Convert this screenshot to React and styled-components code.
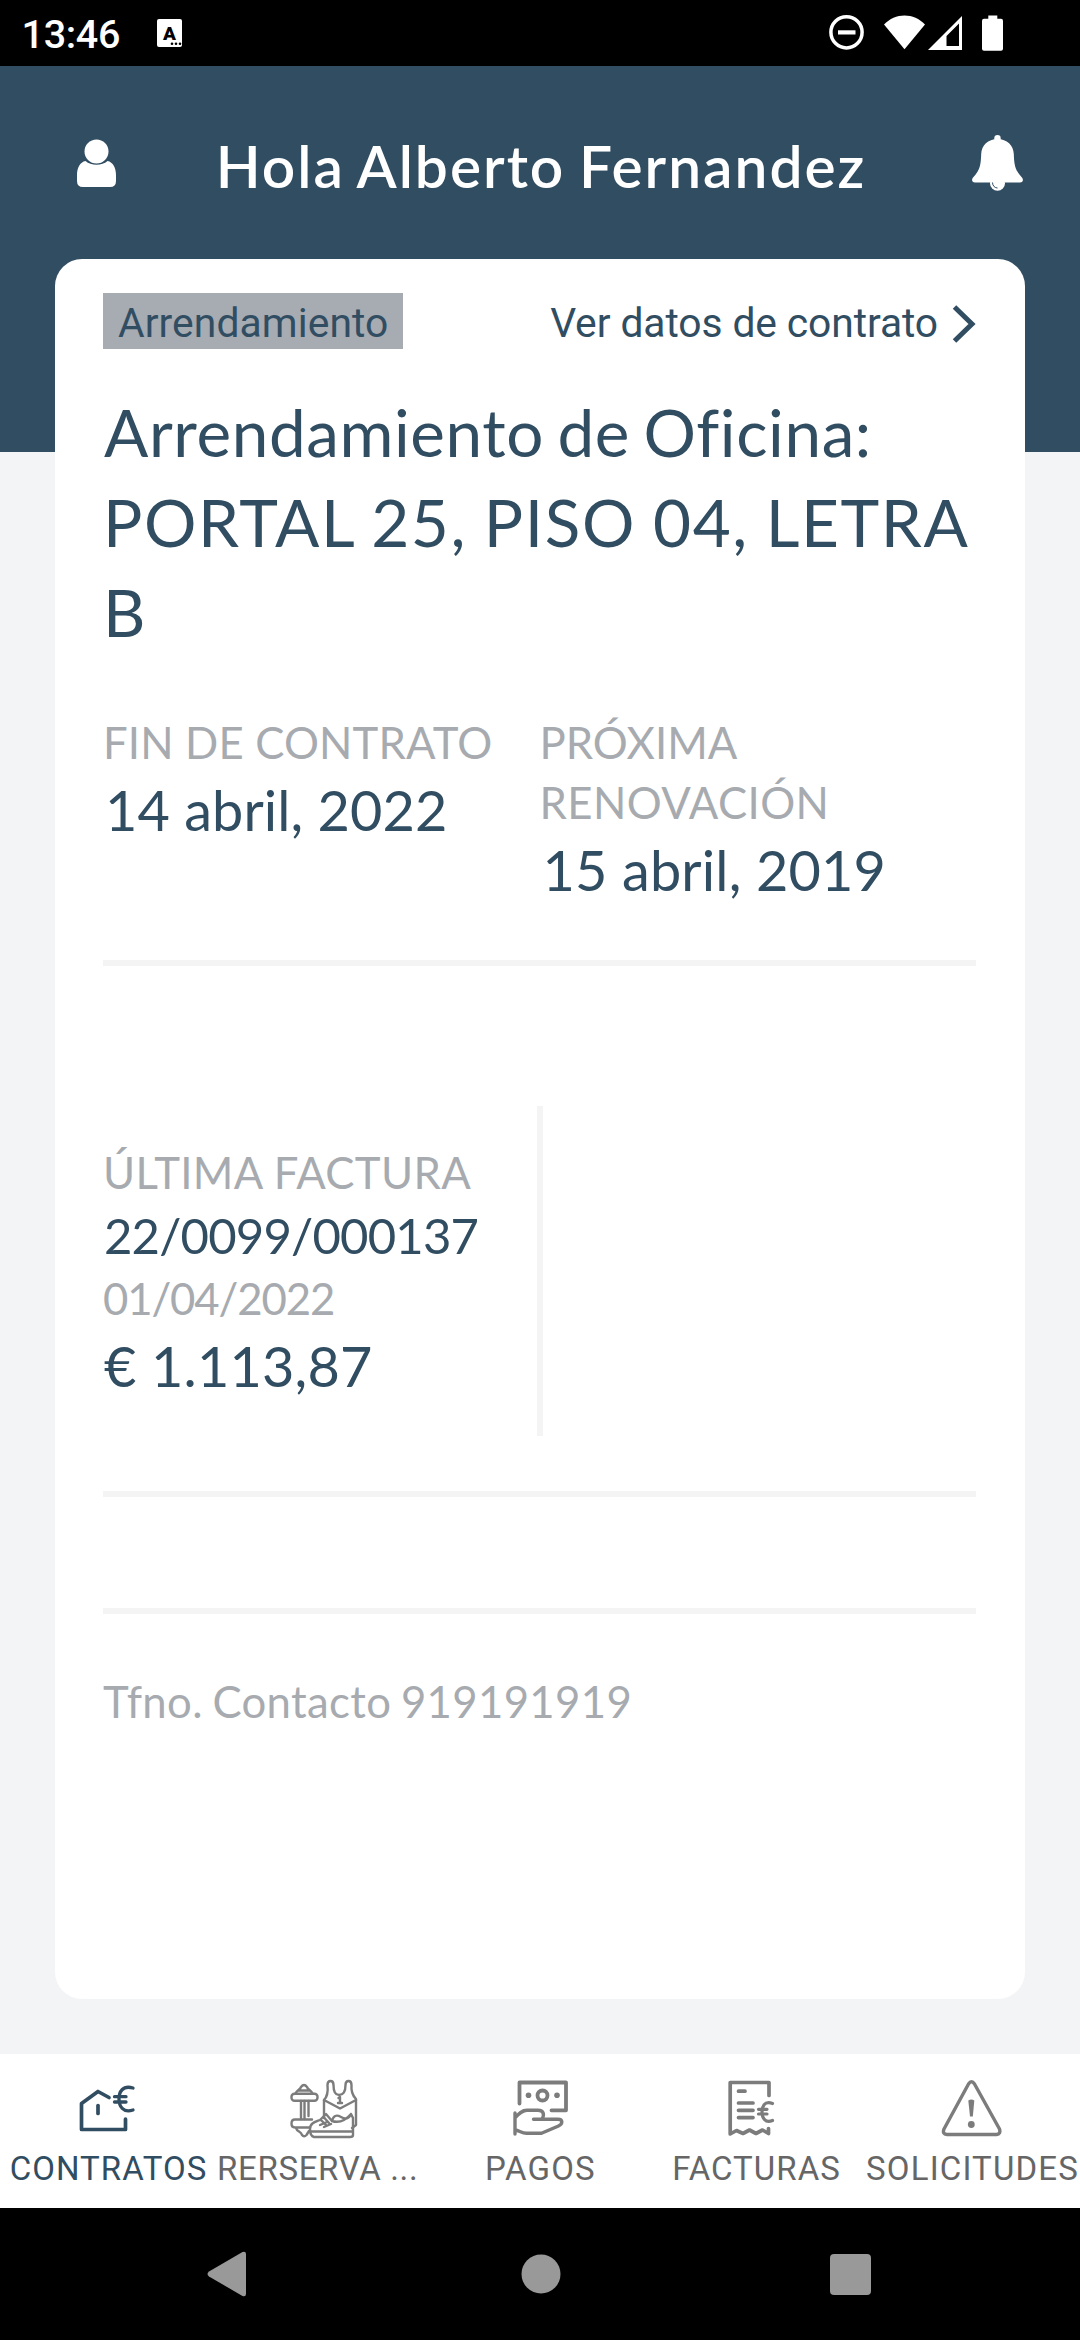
import React from "react";
import styled, { createGlobalStyle } from "styled-components";

const navy = "#314d62";
const grey = "#a7abb0";

const GlobalStyle = createGlobalStyle`
  *, *::before, *::after { box-sizing: border-box; }
  body { margin: 0; background: #000; }
  svg { display: block; flex: none; overflow: visible; }
`;

const Screen = styled.div`
  width: 1080px;
  height: 2340px;
  display: flex;
  flex-direction: column;
  overflow: hidden;
  font-family: Lato, "Open Sans", sans-serif;
  color: ${navy};
`;

/* System status bar */
const StatusBar = styled.div`
  height: 66px;
  flex: none;
  display: flex;
  align-items: center;
  padding: 0 77px 0 21.5px;
  background: #000;
  color: #fff;
`;
const Clock = styled.span`
  font: 500 39.5px/66px Roboto, sans-serif;
  letter-spacing: -0.32px;
  padding-top: 3px;
  margin-right: 36.5px;
`;
const StatusIcons = styled.div`
  display: flex;
  align-items: center;
  margin-left: auto;
`;
const StatusGlyph = styled.svg`
  margin-left: ${(p) => p.$gap || 0}px;
`;

/* App area */
const Main = styled.main`
  height: 1988px;
  flex: none;
  padding: 0 55px;
  background: linear-gradient(${navy} 386px, #f3f4f6 386px);
`;
const Header = styled.header`
  height: 193px;
  display: flex;
  align-items: center;
  justify-content: space-between;
  padding: 0 2px 0 22px;
  color: #fff;
`;
const Greeting = styled.h1`
  margin: 0;
  padding-top: 4px;
  font-size: 58.6px;
  font-weight: 600;
  line-height: 70px;
  letter-spacing: 2px;
  word-spacing: -3px;
  white-space: nowrap;
  margin-right: 6px;
`;
const Card = styled.section`
  height: 1740px;
  padding: 34px 49px 0 48px;
  border-radius: 27px;
  background: #fff;
`;
const CardTop = styled.div`
  height: 56px;
  display: flex;
  justify-content: space-between;
  font: 400 40.8px/60px Roboto, sans-serif;
`;
const Badge = styled.span`
  width: 300px;
  height: 56px;
  padding-left: 15px;
  background: #a7abb2;
  letter-spacing: 0.08px;
`;
const DetailLink = styled.a`
  display: flex;
  gap: 14px;
  letter-spacing: -0.1px;
  color: inherit;
  white-space: nowrap;
`;
const Chevron = styled.svg`
  margin-top: 11.5px;
`;
const Title = styled.h2`
  margin: 38px 0 0;
  font-size: 65.6px;
  font-weight: 400;
  line-height: 90px;
  white-space: nowrap;
`;
const TitleLine = styled.span`
  display: block;
  letter-spacing: ${(p) => p.$track}px;
  word-spacing: ${(p) => p.$word || 0}px;
  padding-left: ${(p) => p.$inset || 0}px;
`;
const Dates = styled.div`
  display: grid;
  grid-template-columns: 1fr 1fr;
  margin-top: 54.5px;
`;
const Label = styled.p`
  margin: 0;
  font-size: 43.7px;
  line-height: ${(p) => p.$line || 60}px;
  letter-spacing: ${(p) => p.$track || 0}px;
  color: ${grey};
`;
const Value = styled.p`
  margin: 0;
  font-size: ${(p) => p.$size || 55.8}px;
  line-height: ${(p) => p.$line || 76}px;
  letter-spacing: ${(p) => p.$track || 0}px;
  padding-left: ${(p) => p.$inset || 0}px;
`;
const Divider = styled.hr`
  height: 6px;
  margin: ${(p) => p.$gap}px 0 0;
  border: 0;
  background: #f4f4f5;
`;
const Invoices = styled.div`
  height: 330px;
  margin-top: 140px;
  display: grid;
  grid-template-columns: 1fr 6px 1fr;
`;
const Invoice = styled.div`
  padding-top: 35.5px;
`;
const Split = styled.div`
  background: #f4f4f5;
`;
const Contact = styled.p`
  margin: 56.5px 0 0;
  font-size: 43.7px;
  line-height: 60px;
  letter-spacing: 0.35px;
  word-spacing: -2px;
  color: ${grey};
`;

/* Bottom tabs */
const Tabs = styled.nav`
  height: 154px;
  flex: none;
  display: grid;
  grid-template-columns: repeat(5, 216px);
  background: #fff;
`;
const Tab = styled.div`
  display: flex;
  flex-direction: column;
  align-items: center;
  gap: 11px;
  padding-top: 24px;
  color: ${(p) => (p.$active ? navy : "#666")};
`;
const TabLabel = styled.span`
  font: 400 33px/40px Roboto, sans-serif;
  letter-spacing: ${(p) => p.$track}px;
  padding-left: 1px;
  white-space: nowrap;
  align-self: ${(p) => (p.$start ? "flex-start" : "center")};
`;
const TabIcon = styled.svg.attrs({ fill: "none", stroke: "currentColor", strokeLinecap: "round", strokeLinejoin: "round" })`
  width: ${(p) => p.$w || 60}px;
  height: 60px;
  opacity: ${(p) => (p.$soft ? 0.85 : 1)};
`;

/* System navigation */
const SystemNav = styled.div`
  height: 132px;
  flex: none;
  display: grid;
  grid-template-columns: 315px 1fr 315px;
  align-items: center;
  justify-items: center;
  padding-left: 1px;
  background: #000;
  color: #999;
`;
const NavKey = styled.div`
  padding-left: ${(p) => p.$before || 0}px;
  padding-right: ${(p) => p.$after || 0}px;
`;

const PersonIcon = () => (
  <svg width="39" height="48" viewBox="0 0 39 48" fill="#fff">
    <circle cx="19.5" cy="12.5" r="12" />
    <path d="M8.5 22C14 27 25 27 30.5 22C36 23 39 29 39 36V42Q39 48 33 48H6Q0 48 0 42V36C0 29 3 23 8.5 22Z" />
  </svg>
);

const BellIcon = () => (
  <svg width="51" height="56" viewBox="0 0 51 56" fill="#fff">
    <circle cx="25.5" cy="3.2" r="3.2" />
    <path d="M25.5 4C35 4 41.5 10.5 41.8 19C42.2 30 43 35 49.5 42C52 44.5 51 47.5 48 47.5H3C0 47.5-1 44.5 1.5 42C8 35 8.8 30 9.2 19C9.5 10.5 16 4 25.5 4Z" />
    <circle cx="25.5" cy="48.2" r="7.5" />
    <path d="M20.5 47.5C20.5 51 23 53 25.5 53" fill="none" stroke={navy} strokeWidth="1" />
  </svg>
);

const HouseEuroIcon = () => (
  <TabIcon viewBox="0 0 60 60" strokeWidth="3.7">
    <path d="M31 19.5L20 13.5L3.5 25.5V51.5H47.5V41" />
    <path d="M20 27.5V35.5" />
    <path d="M55 10C44.5 7 41 14 41 21S45 35.5 55 32M36.5 18.7H48M36.5 24H48" strokeWidth="3.3" />
  </TabIcon>
);

const SportsIcon = () => (
  <TabIcon viewBox="0 0 68 60" $w={68} $soft strokeWidth="2.4">
    <path d="M5.5 15.5C7 12 10 12 11 9Q14 5 17 9C18 12 21 12 22.5 15.5M9 12.5H19" />
    <rect x="1.5" y="15.8" width="26" height="7" rx="3" />
    <path d="M11 23V41M14.5 23V41M18.5 23V38" />
    <path d="M22 41.5H5Q1.5 41.5 1.5 45.5T5 49.5H20M6 50C7 54 11 53 12 57Q14 59.5 16.5 57L19 53" />
    <path d="M34 40V22C38 18 38 12 37.5 7Q37.5 3 40.5 3T43.5 7C43.5 14 45 17 49 17S55.5 14 55.5 7Q55.5 3 58.5 3T61.5 7C61 13 62 17 66 21V47L62 50" />
    <path d="M34 22L50 30.5L66 22M48.500 20L50 19V25M48 25H52" />
    <path d="M20 51C20 45 25 44 30 42L36 36L42 43C48 45 55 43 61 36L63 40V57Q63 59 60 59H24Q20 58 20 51ZM21 53.5H63M31 42L36 47M34 39.5L39 45M30 47L37 44M34 49L41 46M42 43Q44 35 51 39T61 36" />
  </TabIcon>
);

const CashHandIcon = () => (
  <TabIcon viewBox="0 0 60 60" $soft strokeWidth="3.8">
    <path d="M9.5 25.5V4.5H56V32.3H41.5" />
    <circle cx="32.5" cy="17.5" r="5" />
    <circle cx="18.5" cy="17.2" r="2.8" fill="currentColor" stroke="none" />
    <circle cx="47" cy="17.2" r="2.8" fill="currentColor" stroke="none" />
    <path d="M5 35V56M5.5 39.5C9 35.5 12 32.3 17 32.3H28C34 32.3 34.5 37 32 41M23.5 41.3H48C53 41.3 53 46 48.5 48L31.5 55.3H16.5C12 55.3 9 52.5 5.5 52" strokeWidth="3.4" />
  </TabIcon>
);

const ReceiptIcon = () => (
  <TabIcon viewBox="0 0 60 60" $soft strokeWidth="3.7">
    <path d="M43 17.5V4.5H4.2V56L10.5 52.5L17 55.5L23.5 52L30 55.5L36.5 52L42.5 55.5V50.5" />
    <path d="M12.5 13.2H19M12.5 25H27M12.5 32.3H27M12.5 39.6H27" />
    <path d="M46.5 25.5C38 22.5 36 29 36 34S39 46 46.5 42.5M32.5 31.3H41M32.5 36H41" strokeWidth="3.2" />
  </TabIcon>
);

const AlertIcon = () => (
  <TabIcon viewBox="0 0 60 60" $soft strokeWidth="3.4">
    <path d="M26.5 6Q29.5 1.500 32.5 6L57.5 51Q59 56 54.5 56.5H5Q0 56 2 51Z" />
    <path d="M26.3 22.5Q29.3 20.5 32.3 22.5L30.8 38.5H28Z" fill="currentColor" stroke="none" />
    <circle cx="29.3" cy="46.5" r="3.4" fill="currentColor" stroke="none" />
  </TabIcon>
);

const tabs = [
  { label: "CONTRATOS", Icon: HouseEuroIcon, track: 1.04, active: true },
  { label: "RERSERVA ...", Icon: SportsIcon, track: 0.66, start: true },
  { label: "PAGOS", Icon: CashHandIcon, track: 1.22 },
  { label: "FACTURAS", Icon: ReceiptIcon, track: 1.03 },
  { label: "SOLICITUDES", Icon: AlertIcon, track: 1.15 },
];

export default function App() {
  return (
    <Screen>
      <GlobalStyle />
      <StatusBar>
        <Clock>13:46</Clock>
        <svg width="25" height="28" viewBox="0 0 25 28">
          <rect width="25" height="28" rx="2" fill="#fff" />
          <text x="12.5" y="20.5" textAnchor="middle" fontFamily="Roboto" fontWeight="900" fontSize="19" fill="#000">A</text>
          <g fill="#000">
            <circle cx="15" cy="24.8" r="1.3" />
            <circle cx="19" cy="24.8" r="1.3" />
            <circle cx="23" cy="24.8" r="1.3" />
          </g>
        </svg>
        <StatusIcons>
          <StatusGlyph width="35" height="38">
            <circle cx="17.5" cy="18.3" r="15.6" fill="none" stroke="#fff" strokeWidth="3.5" />
            <rect x="9" y="16.3" width="17.5" height="4.2" fill="#fff" />
          </StatusGlyph>
          <StatusGlyph $gap={19.3} width="41" height="38" fill="#fff">
            <path d="M20.5 35.3L0 10.6C11-1.7 30-1.7 41 10.6Z" />
          </StatusGlyph>
          <StatusGlyph $gap={3.5} width="34" height="38" fill="#fff">
            <path fillRule="evenodd" d="M0 36L34 2V36ZM18.5 22V32H31V9.5Z" />
          </StatusGlyph>
          <StatusGlyph $gap={20} width="21" height="38" fill="#fff">
            <rect x="6.3" y="1.5" width="9" height="6" />
            <rect y="4.7" width="21" height="32" rx="2" />
          </StatusGlyph>
        </StatusIcons>
      </StatusBar>

      <Main>
        <Header>
          <PersonIcon />
          <Greeting>Hola Alberto Fernandez</Greeting>
          <BellIcon />
        </Header>
        <Card>
          <CardTop>
            <Badge>Arrendamiento</Badge>
            <DetailLink>
              Ver datos de contrato
              <Chevron width="24" height="38" viewBox="0 0 24 38" fill="none" stroke={navy} strokeWidth="5">
                <path d="M2.5 2L20 19L2.5 36" />
              </Chevron>
            </DetailLink>
          </CardTop>
          <Title>
            <TitleLine $track={0.6} $word={-4} $inset={1}>Arrendamiento de Oficina:</TitleLine>
            <TitleLine $track={1.6} $word={-1.5}>PORTAL 25, PISO 04, LETRA</TitleLine>
            <TitleLine $track={0}>B</TitleLine>
          </Title>
          <Dates>
            <div>
              <Label $track={0.16}>FIN DE CONTRATO</Label>
              <Value $track={0.08} $inset={2}>14 abril, 2022</Value>
            </div>
            <div>
              <Label>PRÓXIMA</Label>
              <Label $track={0.4}>RENOVACIÓN</Label>
              <Value $track={0.16} $inset={3}>15 abril, 2019</Value>
            </div>
          </Dates>
          <Divider $gap={52.5} />
          <Invoices>
            <Invoice>
              <Label $track={0.34}>ÚLTIMA FACTURA</Label>
              <Value $size={49} $line={67.6} $track={-0.8} $inset={1}>22/0099/000137</Value>
              <Label $line={59} $track={-1.1}>01/04/2022</Label>
              <Value $line={75.6} $track={0.19} $inset={1}>€ 1.113,87</Value>
            </Invoice>
            <Split />
          </Invoices>
          <Divider $gap={55} />
          <Divider $gap={111} />
          <Contact>Tfno. Contacto 919191919</Contact>
        </Card>
      </Main>

      <Tabs>
        {tabs.map(({ label, Icon, track, active, start }) => (
          <Tab key={label} $active={active}>
            <Icon />
            <TabLabel $track={track} $start={start}>{label}</TabLabel>
          </Tab>
        ))}
      </Tabs>

      <SystemNav>
        <NavKey $before={136}>
          <svg width="40" height="46" viewBox="0 0 40 46" fill="currentColor">
            <path d="M35.5 1Q39 0 39 3V43Q39 46 35.5 45L2 25.5Q-1 23 2 20.5Z" />
          </svg>
        </NavKey>
        <NavKey>
          <svg width="40" height="40" viewBox="0 0 40 40" fill="currentColor">
            <circle cx="20" cy="20" r="19.5" />
          </svg>
        </NavKey>
        <NavKey $after={144}>
          <svg width="41" height="41" viewBox="0 0 41 41" fill="currentColor">
            <rect width="41" height="41" rx="4" />
          </svg>
        </NavKey>
      </SystemNav>
    </Screen>
  );
}
